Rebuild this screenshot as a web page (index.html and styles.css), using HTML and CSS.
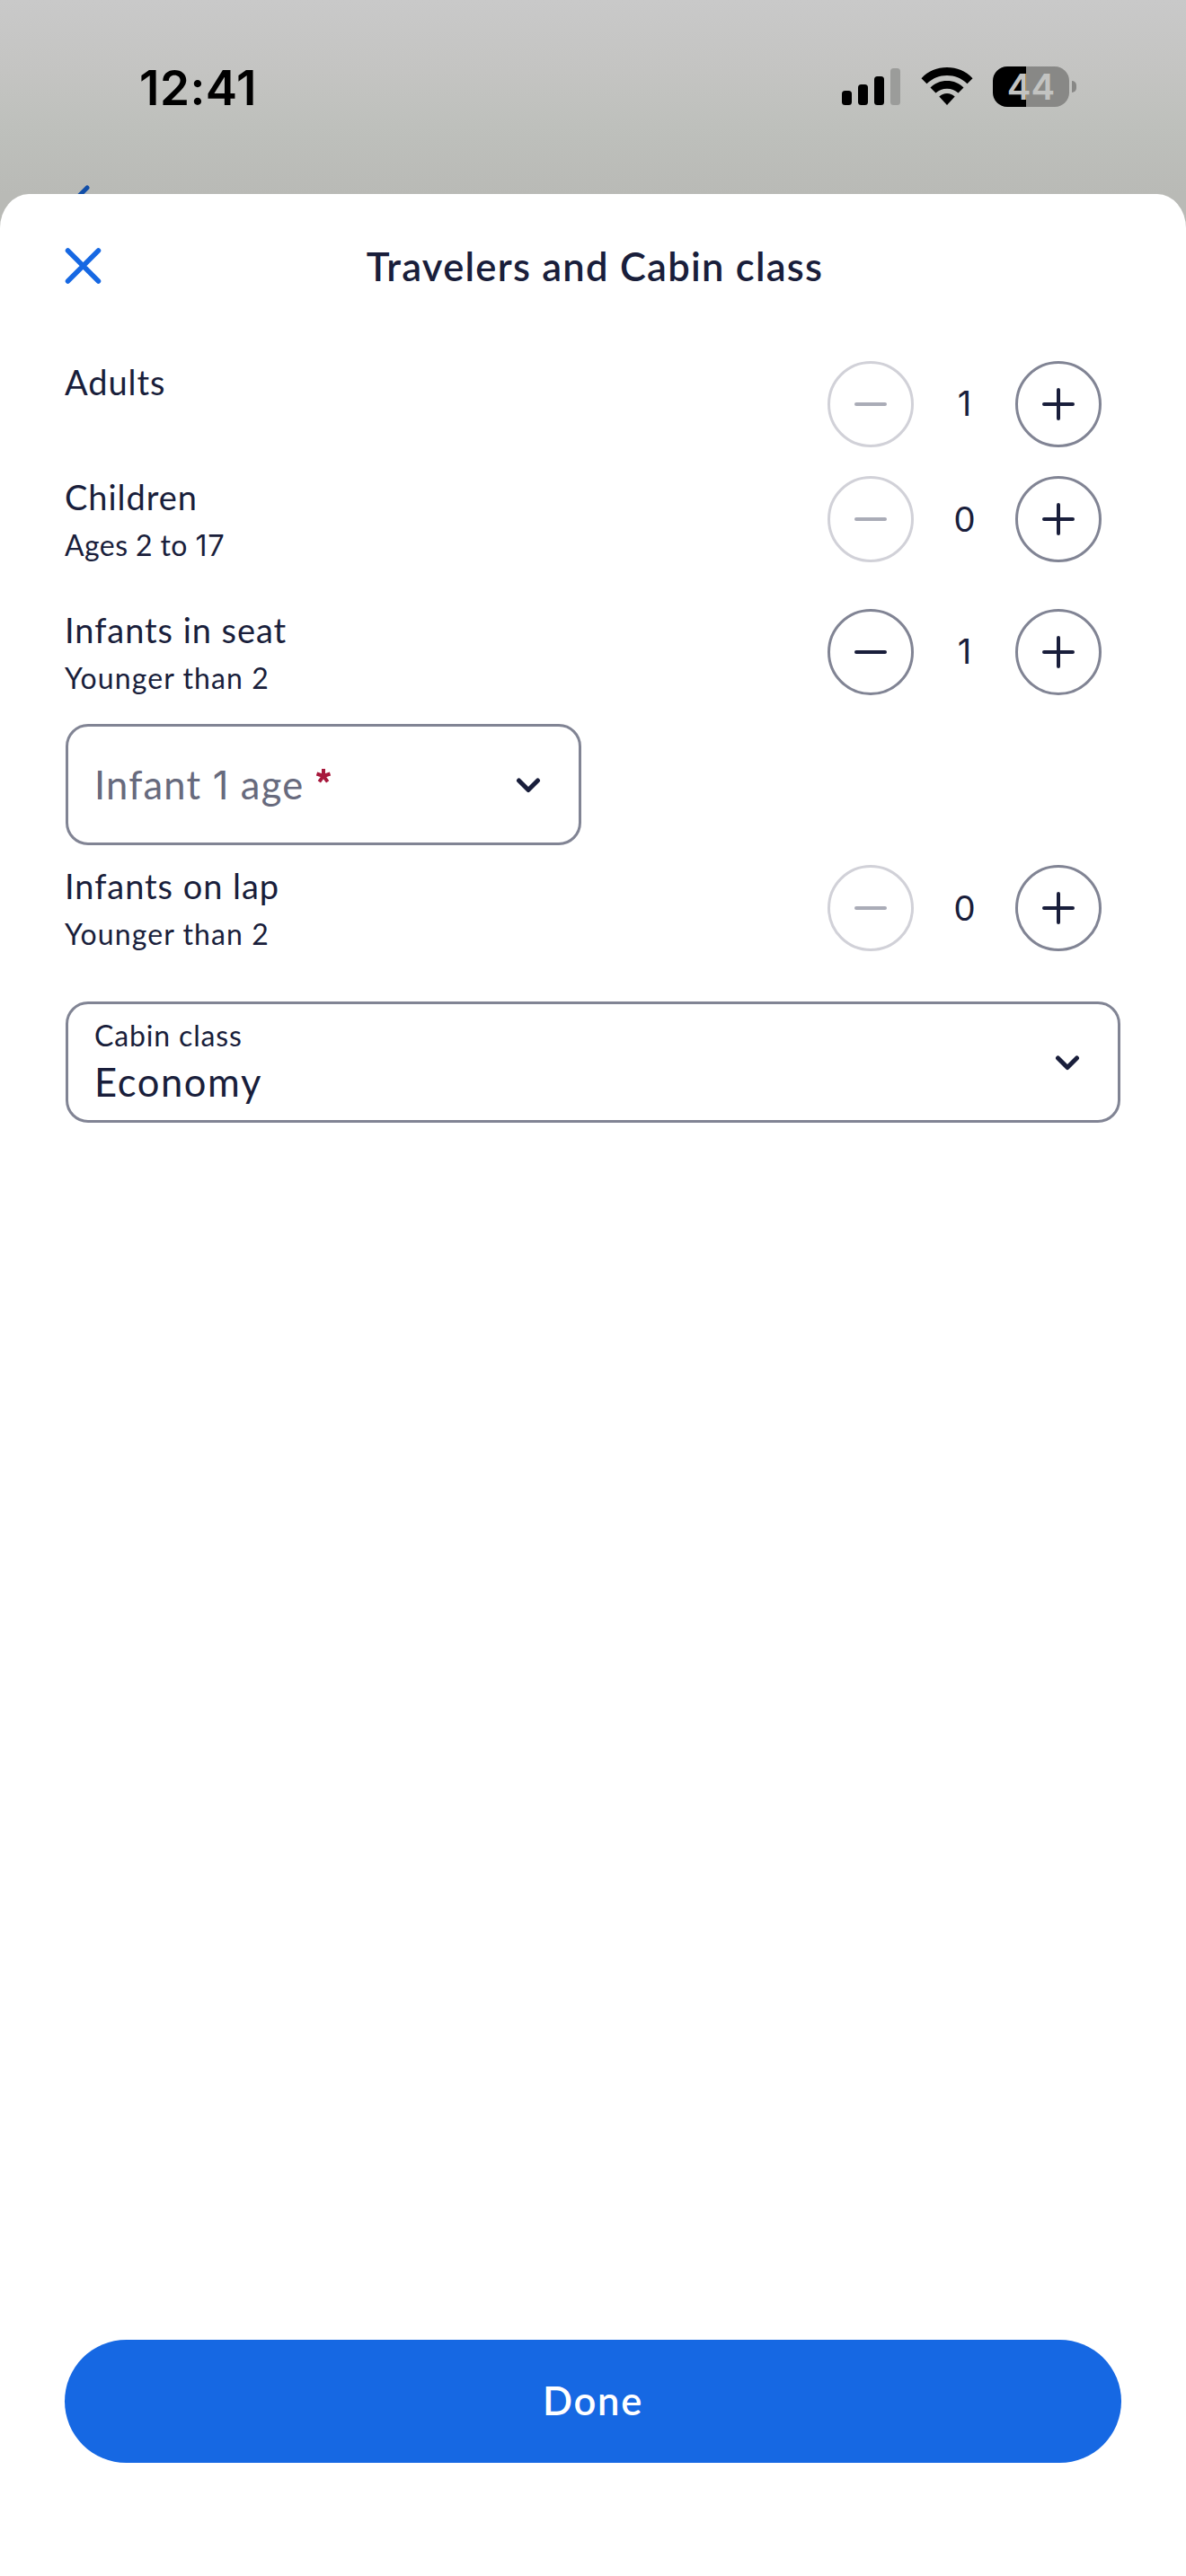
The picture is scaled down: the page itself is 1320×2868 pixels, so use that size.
FILE: index.html
```html
<!DOCTYPE html>
<html lang="en">
<head>
<meta charset="utf-8">
<title>Travelers and Cabin class</title>
<link rel="stylesheet" href="styles.css">
</head>
<body>
<div class="screen">
  <header class="status-bar">
    <span class="time">12:41</span>
    <div class="status-icons">
      <svg class="signal" width="65" height="41" viewBox="0 0 65 41">
        <rect x="0" y="25" width="11" height="16" rx="3.5"/>
        <rect x="18" y="18" width="11" height="23" rx="3.5"/>
        <rect x="36" y="9" width="11" height="32" rx="3.5"/>
        <rect class="weak" x="54" y="0" width="11" height="41" rx="3.5"/>
      </svg>
      <svg class="wifi" width="58" height="42" viewBox="0 0 58 42">
        <path d="M29 0C40 0 50 4 57.500 12.200L51.500 18.300C45 12 37.500 9 29 9S13 12 6.500 18.300L.5 12.200C8 4 18 0 29 0Z"/>
        <path d="M29 15C36.500 15 42.500 17.500 47.500 22.500L41.500 28.600C38 25.400 34 23.800 29 23.800S20 25.400 16.500 28.600L10.500 22.500C15.500 17.500 21.500 15 29 15Z"/>
        <path d="M29 29C32.500 29 35.200 30.200 37.700 32.600L29 42L20.300 32.600C22.800 30.200 25.500 29 29 29Z"/>
      </svg>
      <div class="battery"><span class="charge">44</span></div>
    </div>
  </header>
  <svg class="back" width="14" height="14" viewBox="0 0 14 14"><path d="M11 3L1 13"/></svg>
  <main class="sheet">
    <div class="sheet-header">
      <svg class="close" width="42" height="42" viewBox="0 0 42 42"><path d="M3.500 4L37.500 38M37.500 4L3.500 38"/></svg>
      <h1 class="title">Travelers and Cabin class</h1>
    </div>

    <section class="row adults">
      <div class="label"><span class="name">Adults</span></div>
      <div class="stepper">
        <span class="btn off"><svg viewBox="0 0 36 36"><path d="M2 18H34"/></svg></span>
        <span class="count one">1</span>
        <span class="btn"><svg viewBox="0 0 36 36"><path d="M2 18H34M18 2V34"/></svg></span>
      </div>
    </section>

    <section class="row children">
      <div class="label"><span class="name">Children</span><span class="hint ages">Ages 2 to <span class="one">1</span>7</span></div>
      <div class="stepper">
        <span class="btn off"><svg viewBox="0 0 36 36"><path d="M2 18H34"/></svg></span>
        <span class="count">0</span>
        <span class="btn"><svg viewBox="0 0 36 36"><path d="M2 18H34M18 2V34"/></svg></span>
      </div>
    </section>

    <section class="row seat">
      <div class="label"><span class="name">Infants in seat</span><span class="hint">Younger than 2</span></div>
      <div class="stepper">
        <span class="btn"><svg viewBox="0 0 36 36"><path d="M2 18H34"/></svg></span>
        <span class="count one">1</span>
        <span class="btn"><svg viewBox="0 0 36 36"><path d="M2 18H34M18 2V34"/></svg></span>
      </div>
    </section>

    <div class="select infant-age">
      <span class="placeholder">Infant <span class="one">1</span> age</span><svg class="required" width="18" height="18" viewBox="0 0 18 18"><path d="M9 9V1M9 9L1.500 6.500M9 9L16.500 6.500M9 9L4.300 15.400M9 9L13.700 15.400"/></svg>
      <svg class="chevron" width="28" height="18" viewBox="0 0 28 18"><path d="M3.500 4L14 14.500L24.500 4"/></svg>
    </div>

    <section class="row lap">
      <div class="label"><span class="name">Infants on lap</span><span class="hint">Younger than 2</span></div>
      <div class="stepper">
        <span class="btn off"><svg viewBox="0 0 36 36"><path d="M2 18H34"/></svg></span>
        <span class="count">0</span>
        <span class="btn"><svg viewBox="0 0 36 36"><path d="M2 18H34M18 2V34"/></svg></span>
      </div>
    </section>

    <div class="select cabin">
      <div class="field"><span class="caption">Cabin class</span><span class="value">Economy</span></div>
      <svg class="chevron" width="28" height="18" viewBox="0 0 28 18"><path d="M3.500 4L14 14.500L24.500 4"/></svg>
    </div>

    <button class="done">Done</button>
  </main>
</div>
</body>
</html>
```
FILE: styles.css
```css
* { box-sizing: border-box; }

body {
  margin: 0;
  background: #fff;
  color: #191e3b;
  font-family: Lato, "Open Sans", sans-serif;
}

.screen {
  position: relative;
  display: flex;
  flex-direction: column;
  width: 1320px;
  height: 2868px;
  background: linear-gradient(#c9c9c9 0, #c4c4c2 80px, #bec0bc 140px, #b9bab6 216px, #b9bab6 270px, #fff 270px);
}

/* Status bar */
.status-bar {
  display: flex;
  justify-content: space-between;
  align-items: flex-start;
  height: 216px;
  padding: 66px 122px 0 155px;
}

.time {
  color: #000;
  font: 600 53px/64px Inter, sans-serif;
  letter-spacing: 0.500px;
}

.status-icons {
  display: flex;
  align-items: flex-start;
}

.signal { margin: 10px 23px 0 0; }
.signal .weak { fill: #9b9c9a; }
.wifi { margin: 9px 22px 0 0; }

.battery {
  position: relative;
  width: 85px;
  height: 45px;
  margin: 8px 8px 0 0;
  border-radius: 16px;
  background: linear-gradient(90deg, #000 37px, #888886 37px);
  text-align: center;
}

.battery::after {
  content: "";
  position: absolute;
  left: 88px;
  top: 16px;
  width: 5px;
  height: 13px;
  border-radius: 0 6px 6px 0;
  background: #888886;
}

.charge {
  color: #c2c3c1;
  font: 600 40px/45px Inter, sans-serif;
}

.back {
  position: absolute;
  left: 86px;
  top: 206px;
  fill: none;
  stroke: #114ea8;
  stroke-width: 5;
  stroke-linecap: round;
}

/* Bottom sheet */
.sheet {
  position: relative;
  display: flex;
  flex-direction: column;
  flex: 1;
  padding: 0 72px 126px;
  border-radius: 32px 32px 0 0 / 38px 38px 0 0;
  background: #fff;
}

.sheet-header {
  display: grid;
  grid-template-columns: 42px 1fr 42px;
  align-items: center;
  height: 160px;
}

.close {
  fill: none;
  stroke: #1668e3;
  stroke-width: 5.5;
  stroke-linecap: round;
}

.title {
  margin: 0 0 0 4px;
  font-size: 43.500px;
  font-weight: 600;
  line-height: 56px;
  letter-spacing: 1.260px;
  text-align: center;
}

.row {
  display: flex;
  justify-content: space-between;
  align-items: flex-start;
  padding-right: 22px;
}

.adults { height: 128px; margin-top: 21px; }
.children { height: 148px; }
.seat { height: 133px; }
.lap { height: 157px; margin-top: 17px; }

.label {
  display: flex;
  flex-direction: column;
  gap: 6px;
  padding-top: 1px;
}

.name {
  font-size: 38px;
  line-height: 54px;
  letter-spacing: 0.950px;
}

.hint {
  font-size: 32px;
  line-height: 42px;
  letter-spacing: 1.100px;
}

.ages { letter-spacing: 0.400px; }
.one { font-family: Inter, sans-serif; }

.stepper {
  display: grid;
  grid-template-columns: 96px 113px 96px;
  align-items: center;
  padding-top: 5px;
}

.count {
  padding-bottom: 2px;
  font-size: 38px;
  line-height: 54px;
  text-align: center;
}

.btn {
  display: flex;
  align-items: center;
  justify-content: center;
  width: 96px;
  height: 96px;
  border: 3px solid #818494;
  border-radius: 50%;
}

.btn svg {
  width: 36px;
  height: 36px;
  stroke: #191e3b;
  stroke-width: 4;
  stroke-linecap: round;
}

.btn.off { border-color: #d1d1d8; }
.btn.off svg { stroke: #aaacb7; }

.select {
  display: flex;
  align-items: center;
  height: 135px;
  margin-left: 1px;
  padding: 0 42px 0 29px;
  border: 3px solid #818494;
  border-radius: 25px;
}

.infant-age { width: 574px; }
.cabin { width: 1174px; }

.placeholder {
  color: #676a7d;
  font-size: 43.500px;
  line-height: 56px;
  letter-spacing: 1.200px;
}

.required {
  margin: -20px 0 0 13px;
  fill: none;
  stroke: #a7183c;
  stroke-width: 4;
}

.chevron {
  margin-left: auto;
  fill: none;
  stroke: #191e3b;
  stroke-width: 5;
  stroke-linecap: round;
  stroke-linejoin: round;
}

.field {
  display: flex;
  flex-direction: column;
  padding-bottom: 4px;
}

.caption {
  font-size: 32px;
  line-height: 46px;
  letter-spacing: 0.850px;
}

.value {
  font-size: 43.500px;
  line-height: 56px;
  letter-spacing: 1.600px;
}

.done {
  height: 137px;
  margin: auto 0 0;
  padding: 0 0 4px;
  border: 0;
  border-radius: 69px;
  background: #1668e3;
  color: #fff;
  font: 600 43.500px/56px Lato, sans-serif;
  letter-spacing: 1.700px;
}
```
